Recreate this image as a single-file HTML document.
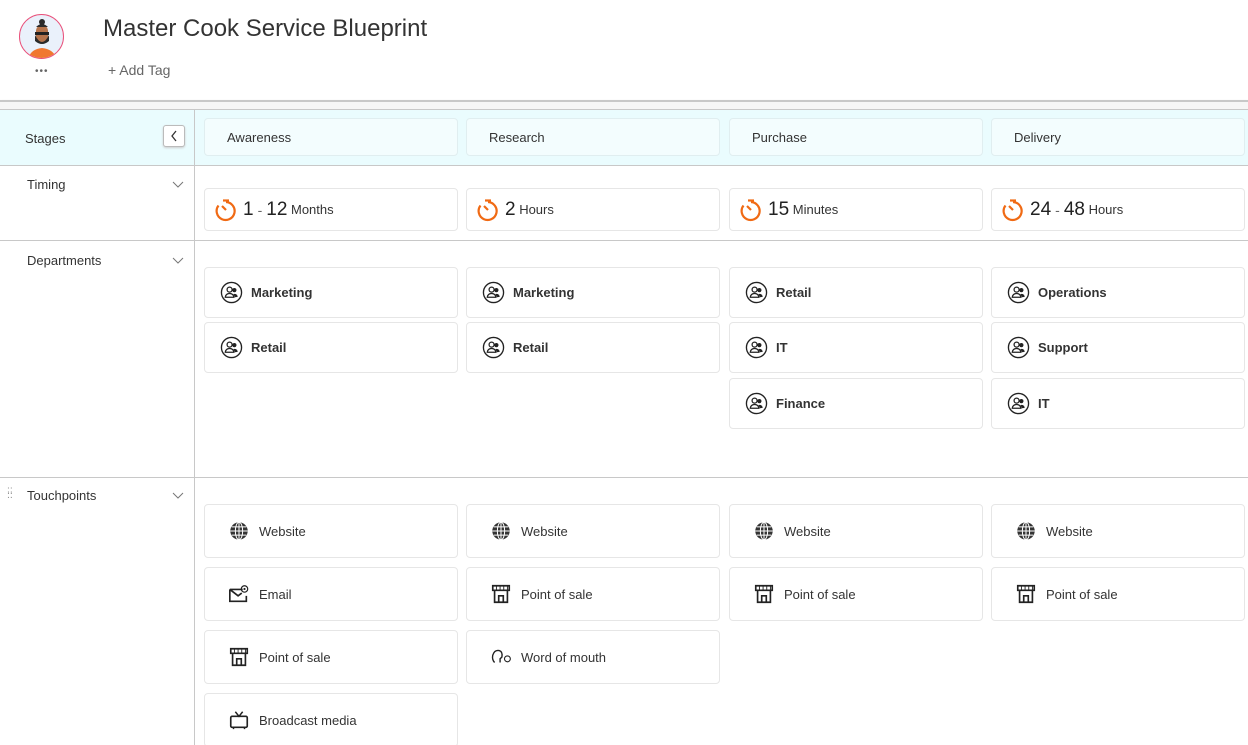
<!DOCTYPE html>
<html><head><style>
*{box-sizing:border-box;margin:0;padding:0}
html,body{width:1248px;height:745px;overflow:hidden}
body{background:#fff;font-family:"Liberation Sans",sans-serif;color:#333;position:relative}
.a{position:absolute}
.card{position:absolute;border:1px solid #e6e6e6;border-radius:4px;background:#fff;display:flex;align-items:center;font-size:13px}
.stage{background:#f3fdfe;border-color:#e0eef0;padding-left:22px;color:#333}
.lbl{position:absolute;font-size:13px;color:#333}
.chev{position:absolute;left:172px;width:12px;height:8px}
.dept{padding-left:15px;font-weight:bold;color:#333}
.dept svg{margin-right:8px}
.tp{padding-left:23px}
.tp svg{margin-right:9px}
.tm{padding-left:9px;font-size:13px}
.tm b{font-size:19px;font-weight:normal;color:#222}
.tm .d{color:#666;margin:0 4px;font-size:14px}
</style></head><body>
<!-- header -->
<div class="a" style="left:19px;top:14px;width:45px;height:45px;border-radius:50%;border:1.5px solid #e9507a;background:#eaf1fb;overflow:hidden">
<svg width="45" height="45" viewBox="0 0 45 45"><path d="M8 45 Q10 34 22 33 Q34 34 37 45Z" fill="#f07830"/><rect x="16" y="10" width="12" height="18" rx="6" fill="#b5744c"/><path d="M15 20 Q22 34 29 20 L29 26 Q22 32 15 26Z" fill="#2a2a2a"/><rect x="15" y="17" width="14" height="3" fill="#222"/><circle cx="22" cy="7" r="3" fill="#2a2a2a"/><path d="M16 12 Q22 6 28 12Z" fill="#2a2a2a"/></svg></div>
<div class="a" style="left:35px;top:66px;font-size:10px;color:#666;letter-spacing:1px">•••</div>
<div class="a" style="left:103px;top:15px;font-size:24px;color:#333">Master Cook Service Blueprint</div>
<div class="a" style="left:108px;top:62px;font-size:14px;color:#666">+ Add Tag</div>
<div class="a" style="left:0;top:100px;width:1248px;height:2px;background:#c8c8c8;box-shadow:0 1px 2px #ddd"></div>
<div class="a" style="left:0;top:102px;width:1248px;height:7px;background:#f6f6f6"></div>
<div class="a" style="left:0;top:109px;width:1248px;height:1px;background:#c8c8c8"></div>
<!-- stage row -->
<div class="a" style="left:0;top:110px;width:1248px;height:55px;background:#eafcfe"></div>
<div class="a" style="left:0;top:165px;width:1248px;height:1px;background:#c8c8c8"></div>
<div class="a" style="left:0;top:240px;width:1248px;height:1px;background:#c8c8c8"></div>
<div class="a" style="left:0;top:477px;width:1248px;height:1px;background:#c8c8c8"></div>
<div class="a" style="left:194px;top:110px;width:1px;height:635px;background:#c8c8c8"></div>
<div class="lbl" style="left:25px;top:131px">Stages</div>
<div class="a" style="left:163px;top:125px;width:22px;height:22px;border:1px solid #bbb;border-radius:3px;background:#fff;box-shadow:0 1px 2px #ccc"><svg width="20" height="20"><path d="M12 5 L8 10 L12 15" stroke="#333" fill="none" stroke-width="1.3"/></svg></div>
<div class="lbl" style="left:27px;top:177px">Timing</div>
<div class="lbl" style="left:27px;top:253px">Departments</div>
<div class="lbl" style="left:27px;top:488px">Touchpoints</div>
<div class="a" style="left:7px;top:489px;font-size:9px;color:#888;line-height:4px;width:8px">⁚⁚<br>⁚⁚</div>
<svg class="chev" style="top:181px"><path d="M1 1 L6 6 L11 1" stroke="#777" fill="none"/></svg>
<svg class="chev" style="top:257px"><path d="M1 1 L6 6 L11 1" stroke="#777" fill="none"/></svg>
<svg class="chev" style="top:492px"><path d="M1 1 L6 6 L11 1" stroke="#777" fill="none"/></svg>

<div class="card stage" style="left:204px;top:118px;width:254px;height:38px">Awareness</div>
<div class="card stage" style="left:466px;top:118px;width:254px;height:38px">Research</div>
<div class="card stage" style="left:729px;top:118px;width:254px;height:38px">Purchase</div>
<div class="card stage" style="left:991px;top:118px;width:254px;height:38px">Delivery</div>

<svg width="0" height="0" style="position:absolute"><defs>
<symbol id="clk" viewBox="0 0 24 24"><path d="M12 4 A9 9 0 1 1 4.5 7.5" stroke="#f06a14" stroke-width="2.2" fill="none"/><path d="M12 12 L8 8" stroke="#f06a14" stroke-width="2.2"/><path d="M9 2.5 H15" stroke="#f06a14" stroke-width="2.2"/></symbol>
<symbol id="ppl" viewBox="0 0 24 24"><circle cx="12" cy="12" r="10.5" stroke="#222" stroke-width="1.4" fill="none"/><circle cx="10" cy="9" r="2.6" stroke="#222" stroke-width="1.3" fill="none"/><circle cx="15" cy="9.5" r="2.2" fill="#222"/><path d="M5.5 17 Q6 13 10 13 Q14 13 14.5 17Z" stroke="#222" stroke-width="1.3" fill="none"/><path d="M14 13.5 Q18 13 18.5 16.5 L15.5 17Z" fill="#222"/></symbol>
<symbol id="web" viewBox="0 0 24 24"><circle cx="12" cy="12" r="9.5" fill="#333"/><g stroke="#fff" stroke-width="1.1" fill="none"><ellipse cx="12" cy="12" rx="4" ry="9.5"/><path d="M2.5 12H21.5M4 7.5H20M4 16.5H20M12 2.5V21.5"/></g></symbol>
<symbol id="pos" viewBox="0 0 24 24"><g stroke="#222" stroke-width="1.8" fill="none"><path d="M3 3H21V8H3Z"/><path d="M5 8V21H19V8"/><path d="M9.5 21V14H14.5V21"/></g><path d="M7 3V8M11 3V8M15 3V8M19 3V8" stroke="#222"/></symbol>
<symbol id="eml" viewBox="0 0 24 24"><path d="M2 7H16M2 7V20H20V14M2 7L11 14L15 11" stroke="#222" stroke-width="1.8" fill="none"/><circle cx="18" cy="6.5" r="3.5" stroke="#222" stroke-width="1.3" fill="none"/><circle cx="18" cy="6.5" r="1.2" fill="#222"/></symbol>
<symbol id="wom" viewBox="0 0 24 24"><path d="M5 18 Q2 15 3 10 Q5 4 10 5 Q14 6 13 12 L11 14 V18" stroke="#222" stroke-width="1.5" fill="none"/><circle cx="19" cy="14" r="3.2" stroke="#222" stroke-width="1.2" fill="none"/></symbol>
<symbol id="tv" viewBox="0 0 24 24"><rect x="3" y="8" width="18" height="12" rx="1.5" stroke="#222" stroke-width="1.8" fill="none"/><path d="M8 3L12 8L16 3M6 20V22M18 20V22" stroke="#222" stroke-width="1.6" fill="none"/></symbol>
</defs></svg>

<div class="card tm" style="left:204px;top:188px;width:254px;height:43px"><svg width="24" height="24" style="margin-right:5px"><use href="#clk"/></svg><b>1</b><span class="d">-</span><b>12</b>&nbsp;Months</div>
<div class="card tm" style="left:466px;top:188px;width:254px;height:43px"><svg width="24" height="24" style="margin-right:5px"><use href="#clk"/></svg><b>2</b>&nbsp;Hours</div>
<div class="card tm" style="left:729px;top:188px;width:254px;height:43px"><svg width="24" height="24" style="margin-right:5px"><use href="#clk"/></svg><b>15</b>&nbsp;Minutes</div>
<div class="card tm" style="left:991px;top:188px;width:254px;height:43px"><svg width="24" height="24" style="margin-right:5px"><use href="#clk"/></svg><b>24</b><span class="d">-</span><b>48</b>&nbsp;Hours</div>

<div class="card dept" style="left:204px;top:267px;width:254px;height:51px"><svg width="23" height="23"><use href="#ppl"/></svg>Marketing</div>
<div class="card dept" style="left:204px;top:322px;width:254px;height:51px"><svg width="23" height="23"><use href="#ppl"/></svg>Retail</div>
<div class="card dept" style="left:466px;top:267px;width:254px;height:51px"><svg width="23" height="23"><use href="#ppl"/></svg>Marketing</div>
<div class="card dept" style="left:466px;top:322px;width:254px;height:51px"><svg width="23" height="23"><use href="#ppl"/></svg>Retail</div>
<div class="card dept" style="left:729px;top:267px;width:254px;height:51px"><svg width="23" height="23"><use href="#ppl"/></svg>Retail</div>
<div class="card dept" style="left:729px;top:322px;width:254px;height:51px"><svg width="23" height="23"><use href="#ppl"/></svg>IT</div>
<div class="card dept" style="left:729px;top:378px;width:254px;height:51px"><svg width="23" height="23"><use href="#ppl"/></svg>Finance</div>
<div class="card dept" style="left:991px;top:267px;width:254px;height:51px"><svg width="23" height="23"><use href="#ppl"/></svg>Operations</div>
<div class="card dept" style="left:991px;top:322px;width:254px;height:51px"><svg width="23" height="23"><use href="#ppl"/></svg>Support</div>
<div class="card dept" style="left:991px;top:378px;width:254px;height:51px"><svg width="23" height="23"><use href="#ppl"/></svg>IT</div>

<div class="card tp" style="left:204px;top:504px;width:254px;height:54px"><svg width="22" height="22"><use href="#web"/></svg>Website</div>
<div class="card tp" style="left:204px;top:567px;width:254px;height:54px"><svg width="22" height="22"><use href="#eml"/></svg>Email</div>
<div class="card tp" style="left:204px;top:630px;width:254px;height:54px"><svg width="22" height="22"><use href="#pos"/></svg>Point of sale</div>
<div class="card tp" style="left:204px;top:693px;width:254px;height:54px"><svg width="22" height="22"><use href="#tv"/></svg>Broadcast media</div>
<div class="card tp" style="left:466px;top:504px;width:254px;height:54px"><svg width="22" height="22"><use href="#web"/></svg>Website</div>
<div class="card tp" style="left:466px;top:567px;width:254px;height:54px"><svg width="22" height="22"><use href="#pos"/></svg>Point of sale</div>
<div class="card tp" style="left:466px;top:630px;width:254px;height:54px"><svg width="22" height="22"><use href="#wom"/></svg>Word of mouth</div>
<div class="card tp" style="left:729px;top:504px;width:254px;height:54px"><svg width="22" height="22"><use href="#web"/></svg>Website</div>
<div class="card tp" style="left:729px;top:567px;width:254px;height:54px"><svg width="22" height="22"><use href="#pos"/></svg>Point of sale</div>
<div class="card tp" style="left:991px;top:504px;width:254px;height:54px"><svg width="22" height="22"><use href="#web"/></svg>Website</div>
<div class="card tp" style="left:991px;top:567px;width:254px;height:54px"><svg width="22" height="22"><use href="#pos"/></svg>Point of sale</div>
</body></html>
